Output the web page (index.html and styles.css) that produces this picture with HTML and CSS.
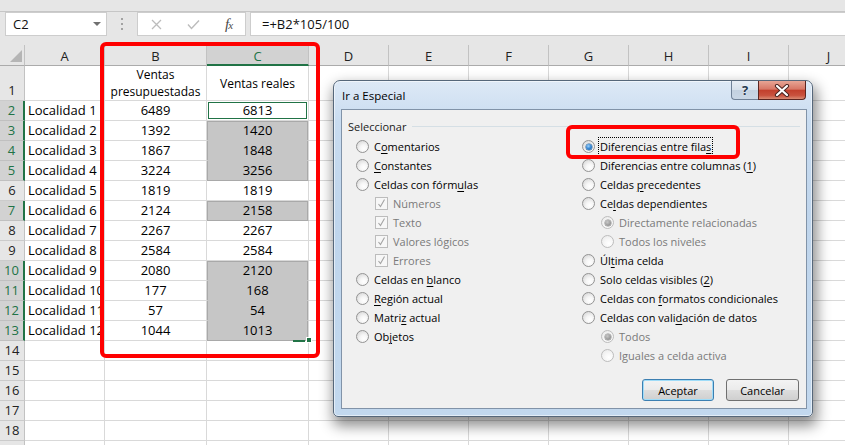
FILE: index.html
```html
<!DOCTYPE html>
<html lang="es">
<head>
<meta charset="utf-8">
<title>Ir a Especial</title>
<link rel="stylesheet" href="styles.css">
</head>
<body>
<div class="app">
  <div class="ribbon-edge"></div>
  <div class="fbar">
    <div class="namebox"><span>C2</span><i class="dd"></i></div>
    <div class="vdots"><i></i><i></i><i></i></div>
    <div class="fxbox">
      <span class="fxb b1"><svg width="11" height="11" viewBox="0 0 11 11"><path d="M1 1 L10 10 M10 1 L1 10" stroke="#bcbcbc" stroke-width="1.3" fill="none"/></svg></span>
      <span class="fxb b2"><svg width="13" height="11" viewBox="0 0 13 11"><path d="M1 5.5 L4.5 9.5 L12 1.5" stroke="#bcbcbc" stroke-width="1.4" fill="none"/></svg></span>
      <span class="fxb b3"><span class="fx">f<small>x</small></span></span>
    </div>
    <div class="finput">=+B2*105/100</div>
  </div>

  <div class="sheet">
    <div class="ch corner"></div><div class="ch">A</div><div class="ch">B</div><div class="ch s">C</div><div class="ch">D</div><div class="ch">E</div><div class="ch">F</div><div class="ch">G</div><div class="ch">H</div><div class="ch">I</div><div class="ch">J</div>

    <div class="rh">1</div><div class="c"></div><div class="c t1"><span>Ventas<br>presupuestadas</span></div><div class="c t1 mid"><span>Ventas reales</span></div><div class="c"></div><div class="c"></div><div class="c"></div><div class="c"></div><div class="c"></div><div class="c"></div><div class="c"></div>

    <div class="rh s">2</div><div class="c">Localidad 1</div><div class="c n">6489</div><div class="c n act">6813</div><div class="c"></div><div class="c"></div><div class="c"></div><div class="c"></div><div class="c"></div><div class="c"></div><div class="c"></div>

    <div class="rh s">3</div><div class="c">Localidad 2</div><div class="c n">1392</div><div class="c n g gt">1420</div><div class="c"></div><div class="c"></div><div class="c"></div><div class="c"></div><div class="c"></div><div class="c"></div><div class="c"></div>

    <div class="rh s">4</div><div class="c">Localidad 3</div><div class="c n">1867</div><div class="c n g">1848</div><div class="c"></div><div class="c"></div><div class="c"></div><div class="c"></div><div class="c"></div><div class="c"></div><div class="c"></div>

    <div class="rh s">5</div><div class="c">Localidad 4</div><div class="c n">3224</div><div class="c n g gb">3256</div><div class="c"></div><div class="c"></div><div class="c"></div><div class="c"></div><div class="c"></div><div class="c"></div><div class="c"></div>

    <div class="rh">6</div><div class="c">Localidad 5</div><div class="c n">1819</div><div class="c n">1819</div><div class="c"></div><div class="c"></div><div class="c"></div><div class="c"></div><div class="c"></div><div class="c"></div><div class="c"></div>

    <div class="rh s">7</div><div class="c">Localidad 6</div><div class="c n">2124</div><div class="c n g gt gb">2158</div><div class="c"></div><div class="c"></div><div class="c"></div><div class="c"></div><div class="c"></div><div class="c"></div><div class="c"></div>

    <div class="rh">8</div><div class="c">Localidad 7</div><div class="c n">2267</div><div class="c n">2267</div><div class="c"></div><div class="c"></div><div class="c"></div><div class="c"></div><div class="c"></div><div class="c"></div><div class="c"></div>

    <div class="rh">9</div><div class="c">Localidad 8</div><div class="c n">2584</div><div class="c n">2584</div><div class="c"></div><div class="c"></div><div class="c"></div><div class="c"></div><div class="c"></div><div class="c"></div><div class="c"></div>

    <div class="rh s">10</div><div class="c">Localidad 9</div><div class="c n">2080</div><div class="c n g gt">2120</div><div class="c"></div><div class="c"></div><div class="c"></div><div class="c"></div><div class="c"></div><div class="c"></div><div class="c"></div>

    <div class="rh s">11</div><div class="c">Localidad 10</div><div class="c n">177</div><div class="c n g">168</div><div class="c"></div><div class="c"></div><div class="c"></div><div class="c"></div><div class="c"></div><div class="c"></div><div class="c"></div>

    <div class="rh s">12</div><div class="c">Localidad 11</div><div class="c n">57</div><div class="c n g">54</div><div class="c"></div><div class="c"></div><div class="c"></div><div class="c"></div><div class="c"></div><div class="c"></div><div class="c"></div>

    <div class="rh s">13</div><div class="c">Localidad 12</div><div class="c n">1044</div><div class="c n g gb last">1013<i class="fl"></i><i class="fh"></i></div><div class="c"></div><div class="c"></div><div class="c"></div><div class="c"></div><div class="c"></div><div class="c"></div><div class="c"></div>

    <div class="rh">14</div><div class="c"></div><div class="c"></div><div class="c"></div><div class="c"></div><div class="c"></div><div class="c"></div><div class="c"></div><div class="c"></div><div class="c"></div><div class="c"></div>
    <div class="rh">15</div><div class="c"></div><div class="c"></div><div class="c"></div><div class="c"></div><div class="c"></div><div class="c"></div><div class="c"></div><div class="c"></div><div class="c"></div><div class="c"></div>
    <div class="rh">16</div><div class="c"></div><div class="c"></div><div class="c"></div><div class="c"></div><div class="c"></div><div class="c"></div><div class="c"></div><div class="c"></div><div class="c"></div><div class="c"></div>
    <div class="rh">17</div><div class="c"></div><div class="c"></div><div class="c"></div><div class="c"></div><div class="c"></div><div class="c"></div><div class="c"></div><div class="c"></div><div class="c"></div><div class="c"></div>
    <div class="rh">18</div><div class="c"></div><div class="c"></div><div class="c"></div><div class="c"></div><div class="c"></div><div class="c"></div><div class="c"></div><div class="c"></div><div class="c"></div><div class="c"></div>
    <div class="rh"></div><div class="c"></div><div class="c"></div><div class="c"></div><div class="c"></div><div class="c"></div><div class="c"></div><div class="c"></div><div class="c"></div><div class="c"></div><div class="c"></div>
  </div>
</div>

<div class="mark mark-cols"></div>

<div class="dlg">
  <div class="tbar">
    <span class="ttl">Ir a Especial</span>
    <span class="tb help">?</span>
    <span class="tb close"><svg width="16" height="13" viewBox="0 0 16 13"><path d="M3 2 L13 11 M13 2 L3 11" stroke="#4a2420" stroke-width="4.2" stroke-linecap="round" fill="none"/><path d="M3 2 L13 11 M13 2 L3 11" stroke="#ffffff" stroke-width="2.2" stroke-linecap="round" fill="none"/></svg></span>
  </div>
  <div class="client">
    <div class="gh">Seleccionar</div>
    <div class="cols">
      <div class="col left">
        <div class="opt"><i class="rb"></i><span>C<u>o</u>mentarios</span></div>
        <div class="opt"><i class="rb"></i><span><u>C</u>onstantes</span></div>
        <div class="opt"><i class="rb"></i><span>Celdas con fórm<u>u</u>las</span></div>
        <div class="opt sub dis"><i class="cb"><svg width="11" height="11" viewBox="0 0 11 11"><path d="M2.5 6 L4.5 8.5 L8.5 1.5" stroke="#a3a3a3" stroke-width="1.1" fill="none"/></svg></i><span>Números</span></div>
        <div class="opt sub dis"><i class="cb"><svg width="11" height="11" viewBox="0 0 11 11"><path d="M2.5 6 L4.5 8.5 L8.5 1.5" stroke="#a3a3a3" stroke-width="1.1" fill="none"/></svg></i><span>Texto</span></div>
        <div class="opt sub dis"><i class="cb"><svg width="11" height="11" viewBox="0 0 11 11"><path d="M2.5 6 L4.5 8.5 L8.5 1.5" stroke="#a3a3a3" stroke-width="1.1" fill="none"/></svg></i><span>Valores lógicos</span></div>
        <div class="opt sub dis"><i class="cb"><svg width="11" height="11" viewBox="0 0 11 11"><path d="M2.5 6 L4.5 8.5 L8.5 1.5" stroke="#a3a3a3" stroke-width="1.1" fill="none"/></svg></i><span>Errores</span></div>
        <div class="opt"><i class="rb"></i><span>Celdas en <u>b</u>lanco</span></div>
        <div class="opt"><i class="rb"></i><span><u>R</u>egión actual</span></div>
        <div class="opt"><i class="rb"></i><span>Matri<u>z</u> actual</span></div>
        <div class="opt"><i class="rb"></i><span>Ob<u>j</u>etos</span></div>
      </div>
      <div class="col right">
        <div class="opt"><i class="rb on"></i><span class="focus">Diferencias entre fila<u>s</u></span></div>
        <div class="opt"><i class="rb"></i><span>Diferencias entre columnas (<u>1</u>)</span></div>
        <div class="opt"><i class="rb"></i><span>Celdas <u>p</u>recedentes</span></div>
        <div class="opt"><i class="rb"></i><span>Ce<u>l</u>das dependientes</span></div>
        <div class="opt sub dis"><i class="rb on"></i><span>Directamente relacionadas</span></div>
        <div class="opt sub dis"><i class="rb"></i><span>Todos los niveles</span></div>
        <div class="opt"><i class="rb"></i><span>Úl<u>t</u>ima celda</span></div>
        <div class="opt"><i class="rb"></i><span>Solo celdas visibles (<u>2</u>)</span></div>
        <div class="opt"><i class="rb"></i><span>Celdas con <u>f</u>ormatos condicionales</span></div>
        <div class="opt"><i class="rb"></i><span>Celdas con vali<u>d</u>ación de datos</span></div>
        <div class="opt sub dis"><i class="rb on"></i><span>Todos</span></div>
        <div class="opt sub dis"><i class="rb"></i><span>Iguales a celda activa</span></div>
      </div>
    </div>
    <div class="btns">
      <button class="btn def">Aceptar</button>
      <button class="btn">Cancelar</button>
    </div>
  </div>
</div>

<div class="mark mark-opt"></div>
</body>
</html>
```

FILE: styles.css
```css
* { box-sizing: border-box; margin: 0; padding: 0; }
html, body { background: #fff; }
body {
  width: 845px;
  height: 445px;
  overflow: hidden;
  position: relative;
  font-family: "Open Sans", "Liberation Sans", sans-serif;
  color: #000;
}
.app { display: flex; flex-direction: column; height: 445px; }
.app > * { flex: none; }

/* formula bar */
.ribbon-edge { height: 12px; background: #e6e6e6; border-bottom: 1px solid #c6c6c6; }
.fbar { height: 33px; background: #e6e6e6; display: flex; align-items: flex-start; padding-left: 5px; }
.namebox {
  width: 102px; height: 24px; background: #fff; border: 1px solid #cdcdcd;
  display: flex; align-items: center; justify-content: space-between;
  padding: 0 5px 0 7px; font-size: 13px; color: #111;
}
.dd { width: 0; height: 0; border-left: 4px solid transparent; border-right: 4px solid transparent; border-top: 4px solid #707070; }
.vdots { width: 30px; height: 24px; display: flex; flex-direction: column; align-items: center; justify-content: center; gap: 3px; }
.vdots i { width: 2px; height: 2px; background: #a2a2a2; }
.fxbox { width: 109px; height: 24px; background: #fff; border: 1px solid #cdcdcd; display: flex; align-items: center; }
.fxb { display: flex; align-items: center; justify-content: center; height: 22px; }
.b1 { width: 37px; }
.b2 { width: 37px; }
.b3 { width: 33px; }
.fx { font-family: "Liberation Serif", serif; font-style: italic; font-size: 15px; color: #4a4a4a; letter-spacing: -1px; }
.fx small { font-size: 11px; }
.finput {
  flex: 1; height: 24px; margin-left: 4px; background: #fff; border: 1px solid #cdcdcd; border-right: none;
  padding-left: 11px; font-size: 13px; line-height: 22px; color: #111;
}

/* sheet */
.sheet {
  display: grid;
  grid-template-columns: 25px 80px 102px 102px repeat(7, 80px);
  grid-template-rows: 21px 35px repeat(18, 20px);
  width: 869px;
}
.ch {
  background: #e6e6e6; border-right: 1px solid #c2c2c2; border-bottom: 1px solid #ababab;
  display: flex; align-items: center; justify-content: center; padding-top: 2px;
  font-size: 13px; color: #222;
}
.ch.s { background: #d2d2d2; color: #217346; border-bottom: 2px solid #217346; }
.corner { position: relative; }
.corner::after {
  content: ""; position: absolute; right: 2px; bottom: 3px; width: 0; height: 0;
  border-left: 12px solid transparent; border-bottom: 12px solid #b5b5b5;
}
.rh {
  background: #e6e6e6; border-right: 1px solid #c2c2c2; border-bottom: 1px solid #cbcbcb;
  display: flex; align-items: flex-end; justify-content: center;
  font-size: 13px; line-height: 19px; color: #222;
}
.rh.s { background: #d2d2d2; color: #217346; border-right: 2px solid #217346; border-bottom-color: #c0c0c0; }
.c {
  border-right: 1px solid #d9d9d9; border-bottom: 1px solid #d9d9d9;
  display: flex; align-items: flex-end; padding: 0 3px;
  font-size: 13px; line-height: 19px; white-space: nowrap; overflow: hidden; color: #000;
}
.n { justify-content: center; }
.t1 { justify-content: center; text-align: center; font-size: 12px; line-height: 17px; }
.t1.mid { align-items: center; }
.act { box-shadow: inset 0 0 0 1px #fff, inset 0 0 0 2px #217346; }
.g {
  background: #c6c6c6; border-bottom-color: #c6c6c6;
  box-shadow: inset 1px 0 #a9a9a9, inset -1px 0 #a9a9a9;
}
.g.gt { box-shadow: inset 1px 0 #a9a9a9, inset -1px 0 #a9a9a9, inset 0 1px #a9a9a9; }
.g.gb { border-bottom-color: #a9a9a9; }
.last { position: relative; overflow: visible; z-index: 2; }
.fl { position: absolute; left: 86px; top: 19px; width: 12px; height: 2px; background: #217346; }
.fh { position: absolute; right: -4px; bottom: -3px; width: 6px; height: 6px; background: #217346; border: 1px solid #fff; }

/* highlight marks */
.mark { position: absolute; border: 4px solid #ff0000; border-radius: 6px; }
.mark-cols { left: 100px; top: 42px; width: 220px; height: 316px; z-index: 5; }
.mark-opt { left: 566px; top: 125px; width: 174px; height: 34px; z-index: 20; }

/* dialog */
.dlg {
  position: absolute; left: 333px; top: 80px; width: 480px; height: 337px; z-index: 10;
  border: 1px solid #56677a; border-radius: 7px 7px 5px 5px;
  background: linear-gradient(180deg, #dde9f6 0%, #c9dcf0 12%, #bfd5ec 40%, #c2d8ee 100%);
  box-shadow: inset 0 0 0 1px rgba(255,255,255,0.55), 2px 7px 14px 2px rgba(0,0,0,0.45);
  display: flex; flex-direction: column;
}
.tbar { height: 28px; flex: none; display: flex; align-items: flex-start; padding: 0 6px 0 8px; }
.ttl { flex: 1; align-self: center; font-size: 11.5px; color: #000; padding-top: 1px; }
.tb { height: 19px; display: flex; align-items: center; justify-content: center; }
.help {
  width: 27px; border: 1px solid #6f8197; border-top: none; border-right: none; border-radius: 0 0 0 4px;
  background: linear-gradient(180deg, #e8eef5 0%, #d6e0eb 50%, #c3d1e0 51%, #c9d7e6 100%);
  font-size: 13px; font-weight: 700; color: #26384d; text-shadow: 0 0 2px #fff; line-height: 18px;
}
.close {
  width: 48px; border: 1px solid #5b2520; border-top: none; border-radius: 0 0 4px 0;
  background: linear-gradient(180deg, #e7a595 0%, #d77766 45%, #c2402d 52%, #c9523e 80%, #d98b74 100%);
}
.client {
  margin: 0 5px 0 7px; height: 300px; flex: none; background: #f0f0f0; border: 1px solid #8193a8;
  padding: 7px 6px 0 6px; display: flex; flex-direction: column;
  font-size: 11px;
}
.client > * { flex: none; }
.gh { display: flex; align-items: center; gap: 6px; height: 18px; color: #1a1a1a; }
.gh::after { content: ""; flex: 1; border-top: 1px solid #d5dfe5; }
.cols { display: flex; margin-top: 2px; padding-left: 8px; }
.col.left { width: 226px; }
.opt { display: flex; align-items: center; gap: 5px; height: 19px; white-space: nowrap; color: #000; }
.opt.sub { padding-left: 19px; }
.opt.dis { color: #7a7a7a; }
.opt u { text-decoration: underline; text-underline-offset: 2px; }
.rb {
  width: 13px; height: 13px; border-radius: 50%; flex: none; position: relative;
  border: 1px solid #939393;
  background: radial-gradient(circle at 62% 68%, #ffffff 0, #f6f6f6 35%, #dedede 75%, #cdcdcd 100%);
}
.rb.on::after {
  content: ""; position: absolute; left: 2.5px; top: 2.5px; width: 6px; height: 6px; border-radius: 50%;
  background: radial-gradient(circle at 40% 35%, #9fd3fa 0, #3a8ad6 45%, #145a9e 100%);
  box-shadow: 0 0 0 0.5px #2a5c8c;
}
.dis .rb { border-color: #bdbdbd; background: radial-gradient(circle at 62% 68%, #fff 0, #f7f7f7 40%, #e6e6e6 100%); }
.dis .rb.on::after { background: radial-gradient(circle at 40% 35%, #c9c9c9 0, #9a9a9a 60%, #8a8a8a 100%); box-shadow: 0 0 0 0.5px #8a8a8a; }
.cb {
  width: 13px; height: 13px; flex: none; border: 1px solid #bcbcbc; background: #f7f7f7;
  display: flex; align-items: center; justify-content: center;
}
.focus { outline: 1px dotted #000; outline-offset: 1px; }
.btns { display: flex; justify-content: flex-end; gap: 12px; margin-top: 14px; margin-right: 1px; }
.btn {
  width: 73px; height: 22px; border: 1px solid #707070; border-radius: 3px;
  background: linear-gradient(180deg, #f3f3f3 0%, #ebebeb 48%, #dddddd 52%, #cfcfcf 100%);
  font-family: "Open Sans", "Liberation Sans", sans-serif; font-size: 11px; color: #000;
}
.btn.def { width: 72px; border-color: #3c7fb1; box-shadow: inset 0 0 0 1px #9fdcf8; }
```
